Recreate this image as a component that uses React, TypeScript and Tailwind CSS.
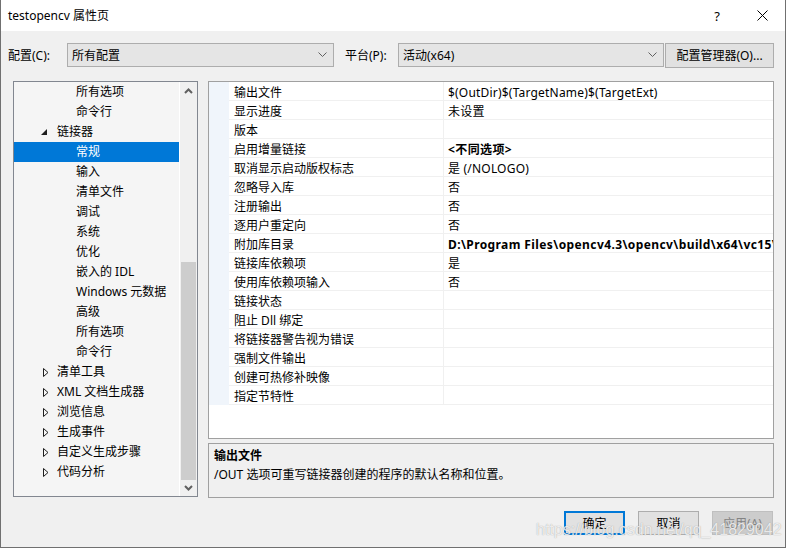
import React from "react";

type TreeItem = {
  label: string;
  parent?: boolean;
  expanded?: boolean;
  selected?: boolean;
};

const treeItems: TreeItem[] = [
  { label: "所有选项" },
  { label: "命令行" },
  { label: "链接器", parent: true, expanded: true },
  { label: "常规", selected: true },
  { label: "输入" },
  { label: "清单文件" },
  { label: "调试" },
  { label: "系统" },
  { label: "优化" },
  { label: "嵌入的 IDL" },
  { label: "Windows 元数据" },
  { label: "高级" },
  { label: "所有选项" },
  { label: "命令行" },
  { label: "清单工具", parent: true },
  { label: "XML 文档生成器", parent: true },
  { label: "浏览信息", parent: true },
  { label: "生成事件", parent: true },
  { label: "自定义生成步骤", parent: true },
  { label: "代码分析", parent: true },
];

const props: { name: string; value: string; bold?: boolean }[] = [
  { name: "输出文件", value: "$(OutDir)$(TargetName)$(TargetExt)" },
  { name: "显示进度", value: "未设置" },
  { name: "版本", value: "" },
  { name: "启用增量链接", value: "<不同选项>", bold: true },
  { name: "取消显示启动版权标志", value: "是 (/NOLOGO)" },
  { name: "忽略导入库", value: "否" },
  { name: "注册输出", value: "否" },
  { name: "逐用户重定向", value: "否" },
  { name: "附加库目录", value: "D:\\Program Files\\opencv4.3\\opencv\\build\\x64\\vc15\\lib", bold: true },
  { name: "链接库依赖项", value: "是" },
  { name: "使用库依赖项输入", value: "否" },
  { name: "链接状态", value: "" },
  { name: "阻止 Dll 绑定", value: "" },
  { name: "将链接器警告视为错误", value: "" },
  { name: "强制文件输出", value: "" },
  { name: "创建可热修补映像", value: "" },
  { name: "指定节特性", value: "" },
];

function ChevronDown() {
  return (
    <svg width="9" height="6" viewBox="0 0 9 6">
      <polyline points="0.5,0.5 4.5,4.5 8.5,0.5" fill="none" stroke="#606060" strokeWidth="1" />
    </svg>
  );
}

function ScrollArrow({ up }: { up?: boolean }) {
  return (
    <svg width="9" height="6" viewBox="0 0 9 6">
      <polyline
        points={up ? "1,5 4.5,1.5 8,5" : "1,1 4.5,4.5 8,1"}
        fill="none"
        stroke="#606060"
        strokeWidth="2"
      />
    </svg>
  );
}

function ComboBox({ text, width }: { text: string; width: string }) {
  return (
    <div className={`flex h-[24px] items-center justify-between border border-[#adadad] bg-[#e5e5e5] pl-[4px] pr-[6px] ${width}`}>
      <span className="pt-[1px]">{text}</span>
      <ChevronDown />
    </div>
  );
}

export default function App() {
  return (
    <div className="relative h-[549px] w-[787px] overflow-hidden bg-white font-['Noto_Sans','Noto_Sans_CJK_SC',sans-serif] text-[12px] leading-[16px] text-black">
      <div className="flex h-[548px] w-[786px] flex-col border-x border-b border-[#707070] bg-[#f0f0f0]">
        {/* title bar */}
        <div className="flex h-[31px] items-center bg-white">
          <span className="pl-[7px]">testopencv 属性页</span>
          <div className="ml-auto flex h-full">
            <div className="flex w-[46px] items-center justify-center text-[13px]">?</div>
            <div className="flex w-[45px] items-center justify-center">
              <svg width="11" height="11" viewBox="0 0 11 11">
                <path d="M0.5 0.5 L10.5 10.5 M10.5 0.5 L0.5 10.5" stroke="#000" strokeWidth="1" />
              </svg>
            </div>
          </div>
        </div>

        {/* config row */}
        <div className="mt-[12px] flex h-[24px] items-center pl-[7px]">
          <span className="w-[59px] pt-[1px]">配置(C):</span>
          <ComboBox text="所有配置" width="w-[267px]" />
          <span className="ml-[11px] w-[53px] pt-[1px]">平台(P):</span>
          <ComboBox text="活动(x64)" width="w-[266px]" />
          <button className="ml-[1px] flex h-[25px] w-[109px] items-center justify-center border border-[#adadad] bg-[#e1e1e1] pt-[1px]">
            配置管理器(O)...
          </button>
        </div>

        {/* main panels */}
        <div className="mt-[14px] flex h-[417px] pl-[12px]">
          {/* tree */}
          <div className="flex h-[416px] w-[185px] border border-[#828790] bg-[#f5f5f5]">
            <div className="w-[165px] overflow-hidden">
              {treeItems.map((item, i) => (
                <div
                  key={i}
                  className={`flex h-[20px] items-center ${item.selected ? "bg-[#0078d7] text-white" : ""}`}
                >
                  {item.parent ? (
                    <>
                      <span className={`flex w-[43px] items-center ${item.expanded ? "pl-[27px]" : "pl-[29px]"}`}>
                        {item.expanded ? (
                          <svg width="6" height="6" viewBox="0 0 6 6">
                            <polygon points="6,0 6,6 0,6" fill="#1e1e1e" />
                          </svg>
                        ) : (
                          <svg width="6" height="9" viewBox="0 0 6 9">
                            <polygon points="0.5,0.5 5,4.5 0.5,8.5" fill="none" stroke="#1e1e1e" strokeWidth="1" />
                          </svg>
                        )}
                      </span>
                      <span>{item.label}</span>
                    </>
                  ) : (
                    <span className="pl-[62px]">{item.label}</span>
                  )}
                </div>
              ))}
            </div>
            <div className="flex w-[18px] flex-col border-l border-white bg-[#f0f0f0]">
              <div className="flex h-[17px] items-center justify-center">
                <ScrollArrow up />
              </div>
              <div className="h-[163px]" />
              <div className="mx-[1px] h-[218px] bg-[#cdcdcd]" />
              <div className="flex h-[16px] items-center justify-center">
                <ScrollArrow />
              </div>
            </div>
          </div>

          {/* right column */}
          <div className="ml-[10px] flex w-[566px] flex-col">
            <div className="h-[358px] overflow-hidden border border-[#a0a0a0] bg-white">
              {props.map((p, i) => (
                <div key={i} className="flex h-[19px]">
                  <div className="w-[20px] shrink-0 bg-[#f0f5fb]" />
                  <div className="flex flex-1 overflow-hidden border-b border-[#f0f0f0]">
                    <div className="w-[215px] shrink-0 border-r border-[#f0f0f0] pl-[5px] pt-[3px]">
                      {p.name}
                    </div>
                    <div
                      className={`whitespace-nowrap pl-[4px] pt-[3px] ${p.bold ? "font-bold tracking-[0.4px]" : "tracking-[0.2px]"}`}
                    >
                      {p.value}
                    </div>
                  </div>
                </div>
              ))}
            </div>
            <div className="mt-[4px] h-[55px] border border-[#a0a0a0] bg-[#f0f0f0] px-[5px] pt-[2px]">
              <div className="h-[19px] font-bold leading-[19px]">输出文件</div>
              <div className="h-[19px] leading-[19px]">/OUT 选项可重写链接器创建的程序的默认名称和位置。</div>
            </div>
          </div>
        </div>

        {/* buttons */}
        <div className="mt-[13px] flex justify-end gap-[13px] pr-[12px]">
          <button className="h-[24px] w-[61px] border-2 border-[#0078d7] bg-[#e1e1e1] pt-[1px]">确定</button>
          <button className="h-[24px] w-[61px] border border-[#adadad] bg-[#e1e1e1] pt-[1px]">取消</button>
          <button className="h-[24px] w-[61px] border border-[#bfbfbf] bg-[#cccccc] pt-[1px] text-[#838383]">应用(A)</button>
        </div>
      </div>

      {/* watermark */}
      <div className="absolute left-[536px] top-[520px] font-['Liberation_Sans',sans-serif] text-[16px] leading-[20px] text-white/80 [text-shadow:0_0_1px_rgba(90,90,90,0.6)]">
        https://blog.csdn.net/qq_41829042
      </div>
    </div>
  );
}
